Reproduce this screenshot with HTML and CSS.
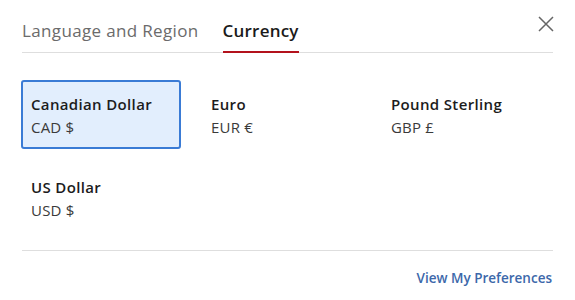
FILE: index.html
```html
<!DOCTYPE html>
<html>
<head>
<meta charset="utf-8">
<link rel="stylesheet" href="styles.css">
</head>
<body>
<div class="panel">
  <div class="header">
    <div class="tab">Language and Region</div>
    <div class="tab active">Currency</div>
    <button class="close" aria-label="Close">
      <svg width="16" height="16" viewBox="0 0 16 16"><path d="M1 1L15 15M15 1L1 15" stroke="#666" stroke-width="1.5" fill="none"/></svg>
    </button>
  </div>
  <div class="grid">
    <div class="option selected"><div class="name">Canadian Dollar</div><div class="code">CAD $</div></div>
    <div class="option"><div class="name">Euro</div><div class="code">EUR €</div></div>
    <div class="option"><div class="name">Pound Sterling</div><div class="code">GBP £</div></div>
    <div class="option"><div class="name">US Dollar</div><div class="code">USD $</div></div>
  </div>
  <div class="footer">
    <a class="link" href="#">View My Preferences</a>
  </div>
</div>
</body>
</html>
```
FILE: styles.css
```css
html, body {
  margin: 0;
  padding: 0;
  background: #fff;
}
body {
  font-family: "Open Sans", "Liberation Sans", sans-serif;
  color: #222;
}
.panel {
  padding: 0 22px;
}
.header {
  display: flex;
  align-items: flex-end;
  gap: 24px;
  border-bottom: 1px solid #dedede;
}
.tab {
  font-size: 17px;
  line-height: 22px;
  padding: 20px 0 10px;
  color: #6b6b6b;
  letter-spacing: 0.35px;
}
.tab.active {
  color: #1a1a1a;
  font-weight: 600;
  border-bottom: 2px solid #b3121c;
  padding-bottom: 9px;
  margin-bottom: -1px;
  letter-spacing: 0.2px;
}
.close {
  margin-left: auto;
  align-self: flex-start;
  margin-top: 16px;
  margin-right: -1px;
  background: none;
  border: 0;
  padding: 0;
  width: 16px;
  height: 16px;
  display: flex;
}
.grid {
  display: grid;
  grid-template-columns: repeat(3, 160px);
  column-gap: 20px;
  row-gap: 14px;
  margin: 27px 0 0 -1px;
}
.option {
  border: 2px solid transparent;
  border-radius: 3px;
  padding: 12px 8px 8px;
  height: 69px;
  box-sizing: border-box;
}
.option.selected {
  border-color: #3a7bd5;
  background: #e2eefd;
}
.name {
  font-size: 15px;
  line-height: 20px;
  font-weight: 600;
  color: #1c1c1c;
  letter-spacing: 0.35px;
}
.code {
  font-size: 15px;
  line-height: 20px;
  margin-top: 3px;
  color: #3a3a3a;
  letter-spacing: 0.2px;
}
.footer {
  margin-top: 18px;
  border-top: 1px solid #dedede;
  display: flex;
  justify-content: flex-end;
  padding-top: 18px;
}
.link {
  font-size: 13.5px;
  line-height: 18px;
  font-weight: 600;
  color: #3c68aa;
  text-decoration: none;
  margin-right: 1px;
}
```
